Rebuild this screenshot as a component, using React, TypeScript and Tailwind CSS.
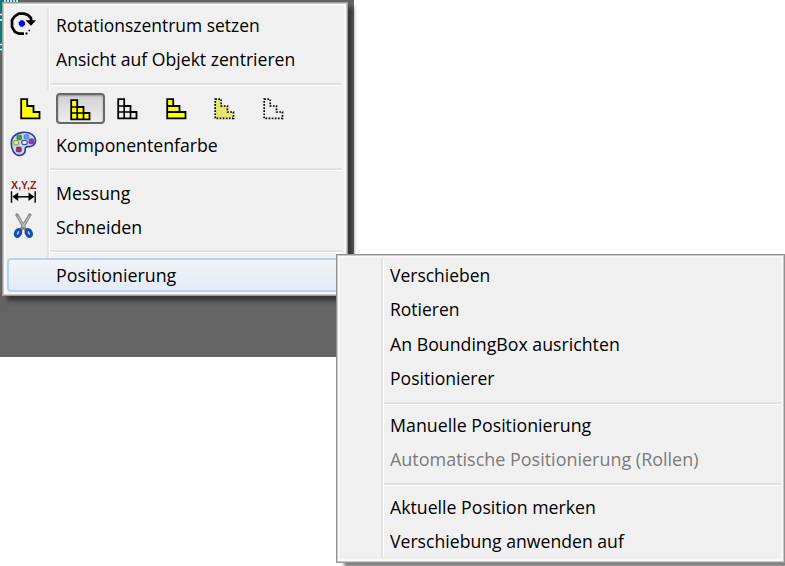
import type { ReactNode } from 'react';

const STEP = 'M1.2 1.2H7.2V8H13.5V14H19.5V20.3H1.2Z';

function StepIcon({ kind }: { kind: 'solid' | 'grid' | 'wire' | 'rows' | 'ghost' | 'dotted' }) {
  const dashed = kind === 'ghost' || kind === 'dotted';
  const fill = kind === 'wire' || kind === 'dotted' ? 'none' : kind === 'ghost' ? 'url(#checker)' : '#ffff00';
  return (
    <svg width="21" height="22" viewBox="0 0 21 22" className="block shrink-0">
      <defs>
        <pattern id="checker" width="3" height="3" patternUnits="userSpaceOnUse">
          <rect width="3" height="3" fill="#f2f252" />
          <rect width="1.5" height="1.5" fill="#d9d98c" />
          <rect x="1.5" y="1.5" width="1.5" height="1.5" fill="#d9d98c" />
        </pattern>
      </defs>
      <path d={STEP} fill={fill} stroke="#000" strokeWidth={dashed ? 1.7 : 1.8} strokeDasharray={dashed ? '1.7 1.4' : undefined} />
      {(kind === 'grid' || kind === 'wire') && <path d="M1 8H8M1 14H14M7.2 8V20M13.5 14V20" fill="none" stroke="#000" strokeWidth="1.7" />}
      {kind === 'rows' && <path d="M1 8H8M1 14H14" fill="none" stroke="#000" strokeWidth="1.8" />}
    </svg>
  );
}

function RotateIcon() {
  return (
    <svg width="27" height="24" viewBox="0 0 27 24" className="-translate-x-px -translate-y-px">
      <path d="M21 9V6L18 3L14 1.7H9L5 4L2 8V15L5 20L9 21.7H14" fill="none" stroke="#000" strokeWidth="2.7" />
      <path d="M15.5 8.2H26L21 13.7Z" fill="#000" />
      <path d="M15.5 20.5h2v2h-2zM18.5 17.7h1.5v1.5h-1.5z" fill="#000" />
      <path d="M10.7 8.3H13L15 10.3V12.7L13 14.7H10.7L8.8 12.7V10.3Z" fill="#0000ff" />
    </svg>
  );
}

function PaletteIcon() {
  return (
    <svg width="27" height="26" viewBox="0 0 27 26" className="-translate-x-px -translate-y-px">
      <path d="M13 1.3C20 .8 25.6 4.6 25.5 9.8C25.4 13.6 22.4 15.8 18.5 15.6C15.4 15.5 15 17.2 15.2 19.3C15.3 22.4 12.5 24.8 8.6 24.3C4.4 23.8 1.4 18.8 1.3 12.6C1.2 6 6 1.8 13 1.3Z" fill="#cdd5ee" stroke="#313f91" strokeWidth="1.7" />
      <path d="M12.6 9.7C16 8.7 17.8 10 17.3 12.2C16.8 13.8 13.5 14 12.6 13.2C11.4 12.2 11.2 10.2 12.6 9.7Z" fill="#f0f0f0" stroke="#4451a0" strokeWidth="1.3" />
      <rect x="7" y="4.2" width="4.5" height="4.5" rx="1" fill="#3eaa20" stroke="#466d7c" strokeWidth=".9" />
      <rect x="14.2" y="3.8" width="4.5" height="4.3" rx="1" fill="#49aef1" stroke="#617bb6" strokeWidth=".9" />
      <rect x="19" y="7.9" width="4.8" height="4.8" rx="1" fill="#8438c9" stroke="#56499a" strokeWidth=".9" />
      <rect x="3.8" y="9.4" width="4.6" height="4.6" rx="1" fill="#f5f52c" stroke="#777e83" strokeWidth=".9" />
      <rect x="6.4" y="16.1" width="4.8" height="4.8" rx="1" fill="#a72b42" stroke="#514887" strokeWidth=".9" />
    </svg>
  );
}

function MeasureIcon() {
  return (
    <div className="flex w-[27px] -translate-x-px -translate-y-px flex-col items-center">
      <span className="block h-[11px] origin-center scale-x-[0.92] text-[11.5px] leading-[11px] font-bold whitespace-nowrap text-[#941d20] font-['Liberation_Sans',sans-serif]">X,Y,Z</span>
      <svg width="27" height="13" viewBox="0 12 27 13">
        <path d="M1.5 12.3V23.7M25.2 12.3V23.7" stroke="#000" strokeWidth="1.4" />
        <path d="M4 17.8H23" stroke="#000" strokeWidth="1.5" />
        <path d="M2.3 17.8L8.2 13.6V22ZM24.4 17.8L18.5 13.6V22Z" fill="#000" />
      </svg>
    </div>
  );
}

function ScissorsIcon() {
  return (
    <svg width="21" height="26" viewBox="0 0 21 26" className="-translate-x-px -translate-y-px">
      <path d="M4 2L12.2 16.2M16.8 2L8.3 16.2" stroke="#858889" strokeWidth="3.3" strokeLinecap="round" />
      <path d="M4.3 3L11.5 14M16.3 3L9.5 14" stroke="#c3c5c6" strokeWidth="1.1" strokeLinecap="round" />
      <ellipse cx="5" cy="20" rx="2.4" ry="3.6" transform="rotate(28 5 20)" fill="#b9c6e2" stroke="#174bb8" strokeWidth="3.1" />
      <ellipse cx="15.8" cy="20" rx="2.4" ry="3.6" transform="rotate(-28 15.8 20)" fill="#b9c6e2" stroke="#174bb8" strokeWidth="3.1" />
    </svg>
  );
}

function Separator({ tight }: { tight?: boolean }) {
  return (
    <div className={`flex items-center pr-0.5 pl-[43px] ${tight ? 'h-[12.8px] pt-[3px]' : 'h-[13.6px] pt-[2px]'}`}>
      <div className="h-[3px] w-full border-t-2 border-b border-t-[#e1e1e1] border-b-white" />
    </div>
  );
}

function MenuItem({ label, fit, icon, active, disabled }: { label: string; fit: string; icon?: ReactNode; active?: boolean; disabled?: boolean }) {
  return (
    <div className={`flex h-[34.3px] shrink-0 items-center ${active ? 'rounded-[4px] border-2 border-[#b5d3f4] bg-linear-to-b from-[#f1f3f7] to-[#e4ebf6]' : disabled ? 'text-[#7b7b7b]' : ''}`}>
      <div className={`flex shrink-0 items-center justify-center ${active ? 'w-[38px]' : 'w-[35px]'}`}>{icon}</div>
      <span className={`${active ? 'ml-[9px]' : 'ml-[14px]'} inline-block origin-left whitespace-nowrap ${fit}`}>{label}</span>
    </div>
  );
}

function Gutter({ children }: { children: ReactNode }) {
  return (
    <div className="flex">
      <div className="-mr-[43px] ml-[40px] w-[3px] shrink-0 border-l-2 border-r border-l-[#e3e3e3] border-r-white" />
      <div className="min-w-0 flex-1">{children}</div>
    </div>
  );
}

export default function App() {
  return (
    <div className="relative h-[566px] w-[785px] overflow-hidden bg-white font-['Open_Sans','Noto_Sans',sans-serif] text-[19px] leading-[34px] text-black">
      <div className="h-[357px] w-[354px] bg-[#646464]">
        <div className="h-[51px] w-5 bg-[#087d7d]">
          <svg width="20" height="51" viewBox="0 0 20 51">
            <path d="M5 0V3M8 0V3M11 0V3M14 0V3M17 0V3M0 14.5H3M0 20H3M0 44.5H3M0 49.5H3" stroke="#fff" strokeWidth="1.5" />
          </svg>
        </div>
      </div>

      <div className="absolute top-[2px] left-[2px] h-[294px] w-[346px] border border-[#9c9c9c] bg-[#f0f0f0] pt-[4.8px] pr-[3px] pl-[4px] shadow-[5px_5px_4px_#383838,inset_0_0_0_1px_#c9c9c9,inset_0_0_0_3px_#f8f8f8]">
        <Gutter>
          <MenuItem label="Rotationszentrum setzen" fit="scale-x-[0.918]" icon={<RotateIcon />} />
          <MenuItem label="Ansicht auf Objekt zentrieren" fit="scale-x-[0.926]" />
          <Separator />
        </Gutter>
        <div className="flex h-[37.5px] items-center pl-[13px]">
          <StepIcon kind="solid" />
          <div className="ml-[15px] flex h-[31px] w-[49px] items-center justify-center rounded-[4px] border-2 border-[#686868] bg-linear-to-b from-[#d0d0d0] to-[#eeeeee] pt-[2px] shadow-[inset_0_1px_2px_#999999]">
            <StepIcon kind="grid" />
          </div>
          <div className="ml-[12px] flex gap-[27.7px]">
            <StepIcon kind="wire" />
            <StepIcon kind="rows" />
            <StepIcon kind="ghost" />
            <StepIcon kind="dotted" />
          </div>
        </div>
        <Gutter>
          <MenuItem label="Komponentenfarbe" fit="scale-x-[0.931]" icon={<PaletteIcon />} />
          <Separator />
          <MenuItem label="Messung" fit="scale-x-[0.935]" icon={<MeasureIcon />} />
          <MenuItem label="Schneiden" fit="scale-x-[0.934]" icon={<ScissorsIcon />} />
          <Separator />
          <MenuItem label="Positionierung" fit="scale-x-[0.938]" active />
        </Gutter>
      </div>

      <div className="absolute top-[254px] left-[336px] h-[309px] w-[449px] border border-[#929292] bg-[#f0f0f0] pt-[3px] pr-px pl-[4px] shadow-[8px_4px_3px_#808080,inset_0_0_0_1px_#c9c9c9,inset_0_0_0_3px_#f8f8f8]">
        <Gutter>
          <MenuItem label="Verschieben" fit="scale-x-[0.92]" />
          <MenuItem label="Rotieren" fit="scale-x-[0.92]" />
          <MenuItem label="An BoundingBox ausrichten" fit="scale-x-[0.933]" />
          <MenuItem label="Positionierer" fit="scale-x-[0.925]" />
          <Separator tight />
          <MenuItem label="Manuelle Positionierung" fit="scale-x-[0.936]" />
          <MenuItem label="Automatische Positionierung (Rollen)" fit="scale-x-[0.945]" disabled />
          <Separator tight />
          <MenuItem label="Aktuelle Position merken" fit="scale-x-[0.932]" />
          <MenuItem label="Verschiebung anwenden auf" fit="scale-x-[0.928]" />
        </Gutter>
      </div>
    </div>
  );
}
